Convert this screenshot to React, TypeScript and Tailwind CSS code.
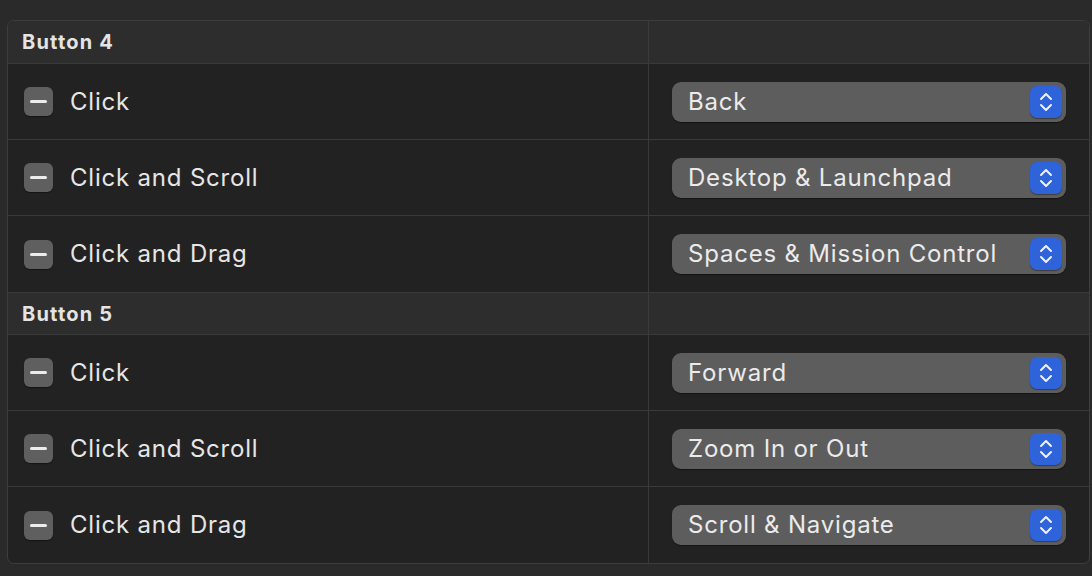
import React from "react";

type Row = { label: string; value: string };
type Group = { title: string; rows: Row[] };

const groups: Group[] = [
  {
    title: "Button 4",
    rows: [
      { label: "Click", value: "Back" },
      { label: "Click and Scroll", value: "Desktop & Launchpad" },
      { label: "Click and Drag", value: "Spaces & Mission Control" },
    ],
  },
  {
    title: "Button 5",
    rows: [
      { label: "Click", value: "Forward" },
      { label: "Click and Scroll", value: "Zoom In or Out" },
      { label: "Click and Drag", value: "Scroll & Navigate" },
    ],
  },
];

const MinusButton = () => (
  <div className="w-[29px] h-[29px] rounded-[6px] bg-[#5f5f5f] shadow-[0_1px_1px_rgba(0,0,0,0.4)] flex items-center justify-center shrink-0">
    <div className="w-[17px] h-[3px] rounded-full bg-[#ececec]" />
  </div>
);

const Stepper = () => (
  <div className="w-[32px] h-[32px] rounded-[7px] bg-[#2f63d9] flex items-center justify-center shadow-[0_1px_1px_rgba(0,0,0,0.35)]">
    <svg width="16" height="22" viewBox="0 0 16 22" fill="none">
      <path d="M3 8 L8 3 L13 8" stroke="#eef2ff" strokeWidth="2" strokeLinecap="round" strokeLinejoin="round" />
      <path d="M3 14 L8 19 L13 14" stroke="#eef2ff" strokeWidth="2" strokeLinecap="round" strokeLinejoin="round" />
    </svg>
  </div>
);

const PopUp = ({ value }: { value: string }) => (
  <div className="w-[394px] h-[40px] rounded-[9px] bg-[#5d5d5d] shadow-[0_1px_1px_rgba(0,0,0,0.4)] flex items-center justify-between pl-[16px] pr-[4px]">
    <span className="text-[24px] tracking-[0.8px] text-[#ebebeb] leading-none">{value}</span>
    <Stepper />
  </div>
);

export default function App() {
  return (
    <div
      className="w-[1092px] h-[576px] bg-[#2a2a2a] pt-[20px] px-[7px] text-[#e6e6e6]"
      style={{ fontFamily: "Inter, 'Noto Sans', sans-serif" }}
    >
      <div className="w-[1083px] rounded-[7px] border border-[#3d3d3d] overflow-hidden bg-[#222222]">
        {groups.map((g, gi) => (
          <div key={g.title}>
            <div
              className={
                "grid grid-cols-[641px_1fr] h-[43px] bg-[#2d2d2d] border-b border-[#3a3a3a] " +
                (gi > 0 ? "border-t" : "")
              }
            >
              <div className="flex items-center pl-[14px] border-r border-[#3a3a3a]">
                <span className="text-[20px] tracking-[1.2px] font-bold text-[#e4e4e4]">{g.title}</span>
              </div>
              <div />
            </div>
            {g.rows.map((r, ri) => (
              <div
                key={r.label + ri}
                className={
                  "grid grid-cols-[641px_1fr] h-[76px] " +
                  (ri < g.rows.length - 1 ? "border-b border-[#3a3a3a]" : "")
                }
              >
                <div className="flex items-center gap-[17px] pl-[16px] border-r border-[#3a3a3a]">
                  <MinusButton />
                  <span className="text-[24px] tracking-[0.8px] text-[#e6e6e6]">{r.label}</span>
                </div>
                <div className="flex items-center pl-[23px]">
                  <PopUp value={r.value} />
                </div>
              </div>
            ))}
          </div>
        ))}
      </div>
    </div>
  );
}
